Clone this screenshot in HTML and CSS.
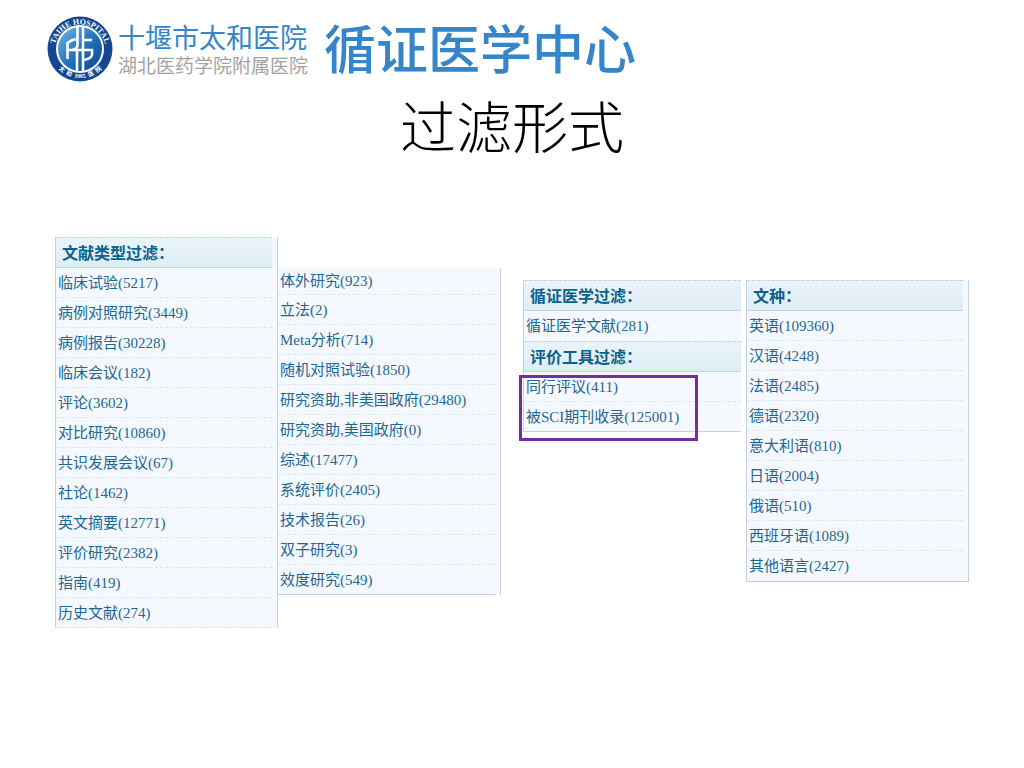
FILE: index.html
```html
<!DOCTYPE html>
<html lang="zh-CN">
<head>
  <meta charset="UTF-8">
  <meta name="viewport" content="width=device-width, initial-scale=1">
  <title>过滤形式 | 循证医学中心</title>
  <link rel="stylesheet" href="styles.css">
</head>
<body>
  <header class="header">
    <svg class="emblem" viewBox="0 0 66 66" role="img" aria-label="太和医院">
      <defs>
        <linearGradient id="disc" x1="0" y1="0" x2="1" y2="1">
          <stop offset="0" stop-color="#6db6ea"/>
          <stop offset="0.5" stop-color="#2674bd"/>
          <stop offset="1" stop-color="#0b3f8c"/>
        </linearGradient>
        <path id="arcTop" d="M8.500 41 A25.500 25.500 0 1 1 57.500 41"/>
        <path id="arcBottom" d="M3 37 A30.500 30.500 0 0 0 63 37"/>
      </defs>
      <circle cx="33" cy="33" r="32.500" fill="#134891"/>
      <circle cx="33" cy="33" r="24" fill="#fff"/>
      <circle cx="33" cy="33" r="22" fill="url(#disc)"/>
      <text class="ring-text"><textPath href="#arcTop" startOffset="50%" text-anchor="middle">TAIHE HOSPITAL</textPath></text>
      <text class="ring-text ring-cn"><textPath href="#arcBottom" startOffset="50%" text-anchor="middle">太  和  1965  医  院</textPath></text>
      <g fill="none" stroke="#fff" stroke-width="2.600">
        <path d="M30.500 11 V29 Q30 34 25 34 H20"/>
        <path d="M29 23 Q24 24 20.500 27 V43"/>
        <path d="M30 34 V55"/>
        <path d="M36 11 V55"/>
        <path d="M36 24 H45"/>
        <path d="M25 34 H45 V39 Q44 43 36 44"/>
      </g>
    </svg>
    <div class="hospital">
      <p class="hospital-name">十堰市太和医院</p>
      <p class="hospital-sub">湖北医药学院附属医院</p>
    </div>
    <p class="center-name">循证医学中心</p>
  </header>

  <h1>过滤形式</h1>

  <main class="board">
    <div class="group">
      <section class="panel">
        <h2>文献类型过滤：</h2>
        <ul>
          <li><a href="#">临床试验(5217)</a></li>
          <li><a href="#">病例对照研究(3449)</a></li>
          <li><a href="#">病例报告(30228)</a></li>
          <li><a href="#">临床会议(182)</a></li>
          <li><a href="#">评论(3602)</a></li>
          <li><a href="#">对比研究(10860)</a></li>
          <li><a href="#">共识发展会议(67)</a></li>
          <li><a href="#">社论(1462)</a></li>
          <li><a href="#">英文摘要(12771)</a></li>
          <li><a href="#">评价研究(2382)</a></li>
          <li><a href="#">指南(419)</a></li>
          <li><a href="#">历史文献(274)</a></li>
        </ul>
      </section>

      <section class="panel panel-more">
        <ul>
          <li><a href="#">体外研究(923)</a></li>
          <li><a href="#">立法(2)</a></li>
          <li><a href="#">Meta分析(714)</a></li>
          <li><a href="#">随机对照试验(1850)</a></li>
          <li><a href="#">研究资助,非美国政府(29480)</a></li>
          <li><a href="#">研究资助,美国政府(0)</a></li>
          <li><a href="#">综述(17477)</a></li>
          <li><a href="#">系统评价(2405)</a></li>
          <li><a href="#">技术报告(26)</a></li>
          <li><a href="#">双子研究(3)</a></li>
          <li><a href="#">效度研究(549)</a></li>
        </ul>
      </section>
    </div>

    <div class="group group-right">
      <section class="panel panel-tools">
        <h2>循证医学过滤：</h2>
        <ul>
          <li><a href="#">循证医学文献(281)</a></li>
        </ul>
        <h2>评价工具过滤：</h2>
        <ul class="marked">
          <li><a href="#">同行评议(411)</a></li>
          <li><a href="#">被SCI期刊收录(125001)</a></li>
        </ul>
      </section>

      <section class="panel panel-lang">
        <h2>文种：</h2>
        <ul>
          <li><a href="#">英语(109360)</a></li>
          <li><a href="#">汉语(4248)</a></li>
          <li><a href="#">法语(2485)</a></li>
          <li><a href="#">德语(2320)</a></li>
          <li><a href="#">意大利语(810)</a></li>
          <li><a href="#">日语(2004)</a></li>
          <li><a href="#">俄语(510)</a></li>
          <li><a href="#">西班牙语(1089)</a></li>
          <li><a href="#">其他语言(2427)</a></li>
        </ul>
      </section>
    </div>
  </main>
</body>
</html>
```
FILE: styles.css
```css
:root {
  --blue: #3585c8;
  --link: #1f6692;
  --head: #0c628d;
  --line: #bcd5e8;
  --dash: #dbe6f1;
  --panel-bg: #f5f9ff;
  --mark: #7030a0;
}

* {
  box-sizing: border-box;
  margin: 0;
  padding: 0;
}

body {
  font-family: "Liberation Serif", "Noto Sans CJK SC", serif;
  background: #fff;
  color: #000;
}

.header {
  display: flex;
  align-items: center;
  padding: 16px 47px 0;
}

.emblem {
  width: 66px;
  height: 66px;
  flex: none;
}

.ring-text {
  font-family: "Liberation Serif", serif;
  font-size: 8px;
  font-weight: bold;
  fill: #fff;
}

.ring-cn {
  font-family: "Liberation Serif", "Noto Sans CJK SC", serif;
  font-size: 6px;
  white-space: pre;
}

.hospital {
  margin-left: 5px;
  padding-top: 6px;
  white-space: nowrap;
}

.hospital-name {
  font-size: 27px;
  line-height: 30px;
  color: var(--blue);
}

.hospital-sub {
  font-size: 19px;
  line-height: 26px;
  color: #a3a3a3;
}

.center-name {
  margin-left: 16px;
  padding-top: 6px;
  font-size: 52px;
  line-height: 60px;
  font-weight: 500;
  color: var(--blue);
  white-space: nowrap;
}

h1 {
  margin-top: 12px;
  font-size: 56px;
  line-height: 70px;
  font-weight: 300;
  text-align: center;
}

.board {
  display: grid;
  grid-template-columns: 1fr 1fr;
  gap: 22px;
  padding: 73px 55px 40px;
}

.group {
  display: grid;
  grid-template-columns: 1fr 1fr;
  align-items: start;
}

.group-right {
  margin-top: 43px;
}

.panel {
  padding-right: 5px;
  background: var(--panel-bg);
  border-left: 1px solid var(--line);
  border-right: 1px solid var(--line);
}

.panel h2 {
  height: 31px;
  padding-left: 6px;
  font-size: 16px;
  line-height: 32px;
  color: var(--head);
  background: linear-gradient(#eaf4fa, #deedf4);
  border-top: 1px dashed var(--line);
  border-bottom: 1px solid var(--line);
}

.panel ul {
  list-style: none;
}

.panel li {
  height: 30px;
  padding-left: 2px;
  font-size: 15px;
  line-height: 30px;
  white-space: nowrap;
  border-bottom: 1px dashed var(--dash);
}

.panel a {
  color: var(--link);
  text-decoration: none;
}

.panel a:hover {
  text-decoration: underline;
}

/* continues the first list, so it starts below the heading */
.panel-more {
  margin-top: 31px;
  border-left: none;
}

.panel-more li:first-child {
  height: 27px;
  line-height: 27px;
}

.panel-more li:last-child,
.marked li:last-child {
  border-bottom: 1px solid var(--line);
}

.panel-tools {
  margin-right: 5px;
  padding-right: 0;
  border-right: none;
}

.panel-tools li:only-child {
  border-bottom: none;
}

.panel-lang {
  border-bottom: 1px solid var(--line);
}

.panel-lang li:last-child {
  border-bottom: none;
}

.marked {
  position: relative;
}

.marked::after {
  content: "";
  position: absolute;
  box-sizing: border-box;
  top: 3px;
  left: -5px;
  width: 179px;
  height: 66px;
  border: 3px solid var(--mark);
  pointer-events: none;
}
```
